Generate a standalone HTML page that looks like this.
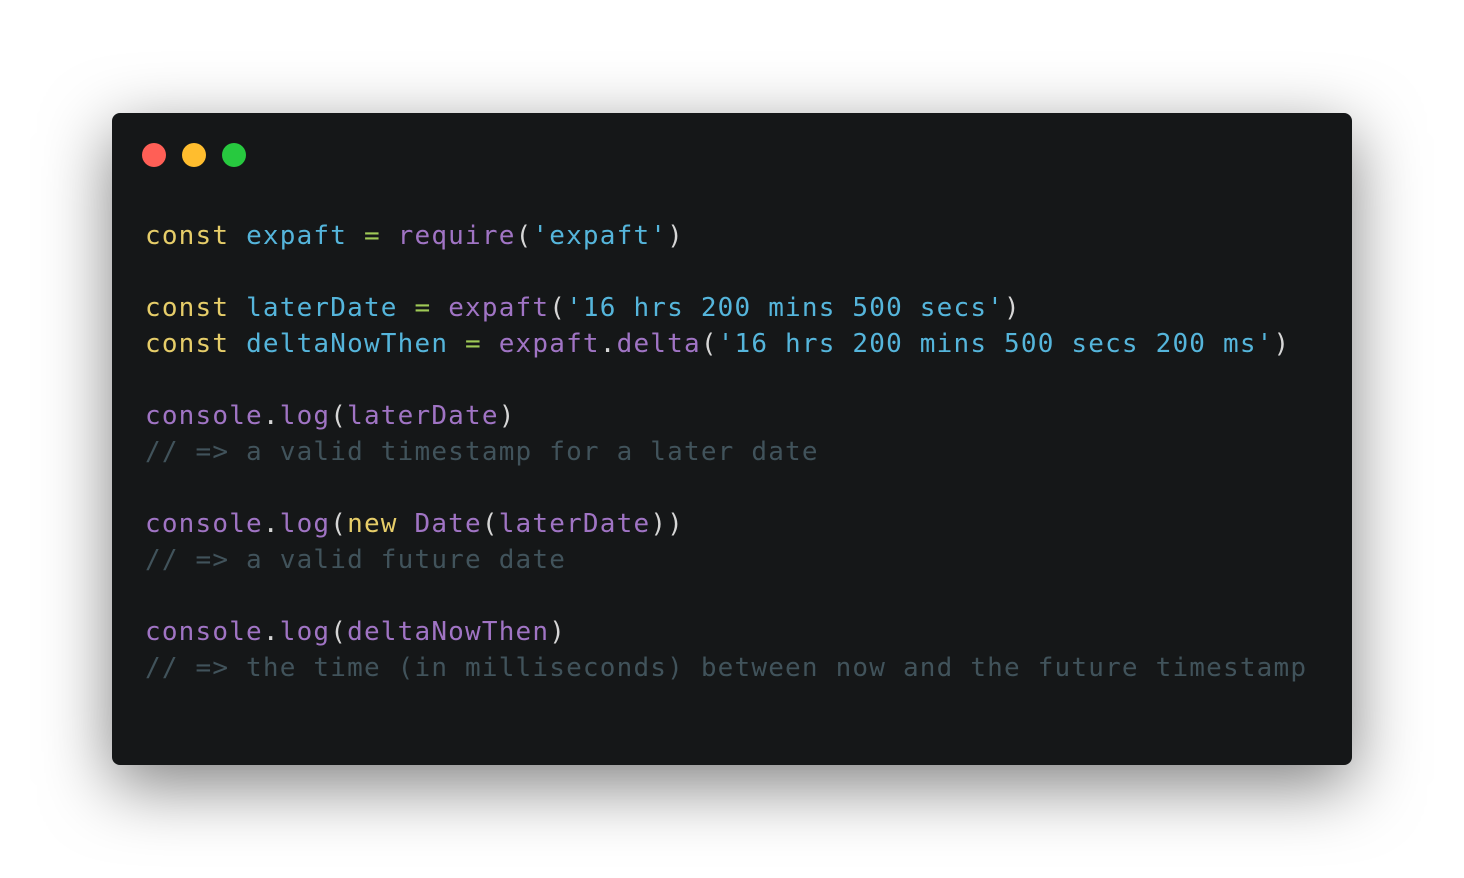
<!DOCTYPE html>
<html><head><style>
html,body{margin:0;padding:0;background:#fff;width:1464px;height:878px;overflow:hidden}
.win{position:absolute;left:112px;top:113px;width:1240px;height:652px;background:#151718;border-radius:8px;box-shadow:0 20px 68px rgba(0,0,0,0.5)}
.dot{position:absolute;top:143px;width:24px;height:24px;border-radius:50%}
pre{position:absolute;left:145px;top:218px;margin:0;font-family:"DejaVu Sans Mono","Liberation Mono",monospace;font-size:26px;letter-spacing:1.19px;line-height:36px;color:#d6d6d6}
.k{color:#e6cd69}.v{color:#55b5db}.f{color:#a074c4}.o{color:#9fca56}.s{color:#55b5db}.c{color:#41535b}
</style></head><body>
<div class="win"></div>
<div class="dot" style="left:142px;background:#ff5f56"></div>
<div class="dot" style="left:182px;background:#ffbd2e"></div>
<div class="dot" style="left:222px;background:#27c93f"></div>
<pre><span class="k">const</span> <span class="v">expaft</span> <span class="o">=</span> <span class="f">require</span>(<span class="s">'expaft'</span>)

<span class="k">const</span> <span class="v">laterDate</span> <span class="o">=</span> <span class="f">expaft</span>(<span class="s">'16 hrs 200 mins 500 secs'</span>)
<span class="k">const</span> <span class="v">deltaNowThen</span> <span class="o">=</span> <span class="f">expaft</span>.<span class="f">delta</span>(<span class="s">'16 hrs 200 mins 500 secs 200 ms'</span>)

<span class="f">console</span>.<span class="f">log</span>(<span class="f">laterDate</span>)
<span class="c">// =&gt; a valid timestamp for a later date</span>

<span class="f">console</span>.<span class="f">log</span>(<span class="k">new</span> <span class="f">Date</span>(<span class="f">laterDate</span>))
<span class="c">// =&gt; a valid future date</span>

<span class="f">console</span>.<span class="f">log</span>(<span class="f">deltaNowThen</span>)
<span class="c">// =&gt; the time (in milliseconds) between now and the future timestamp</span></pre>
</body></html>
